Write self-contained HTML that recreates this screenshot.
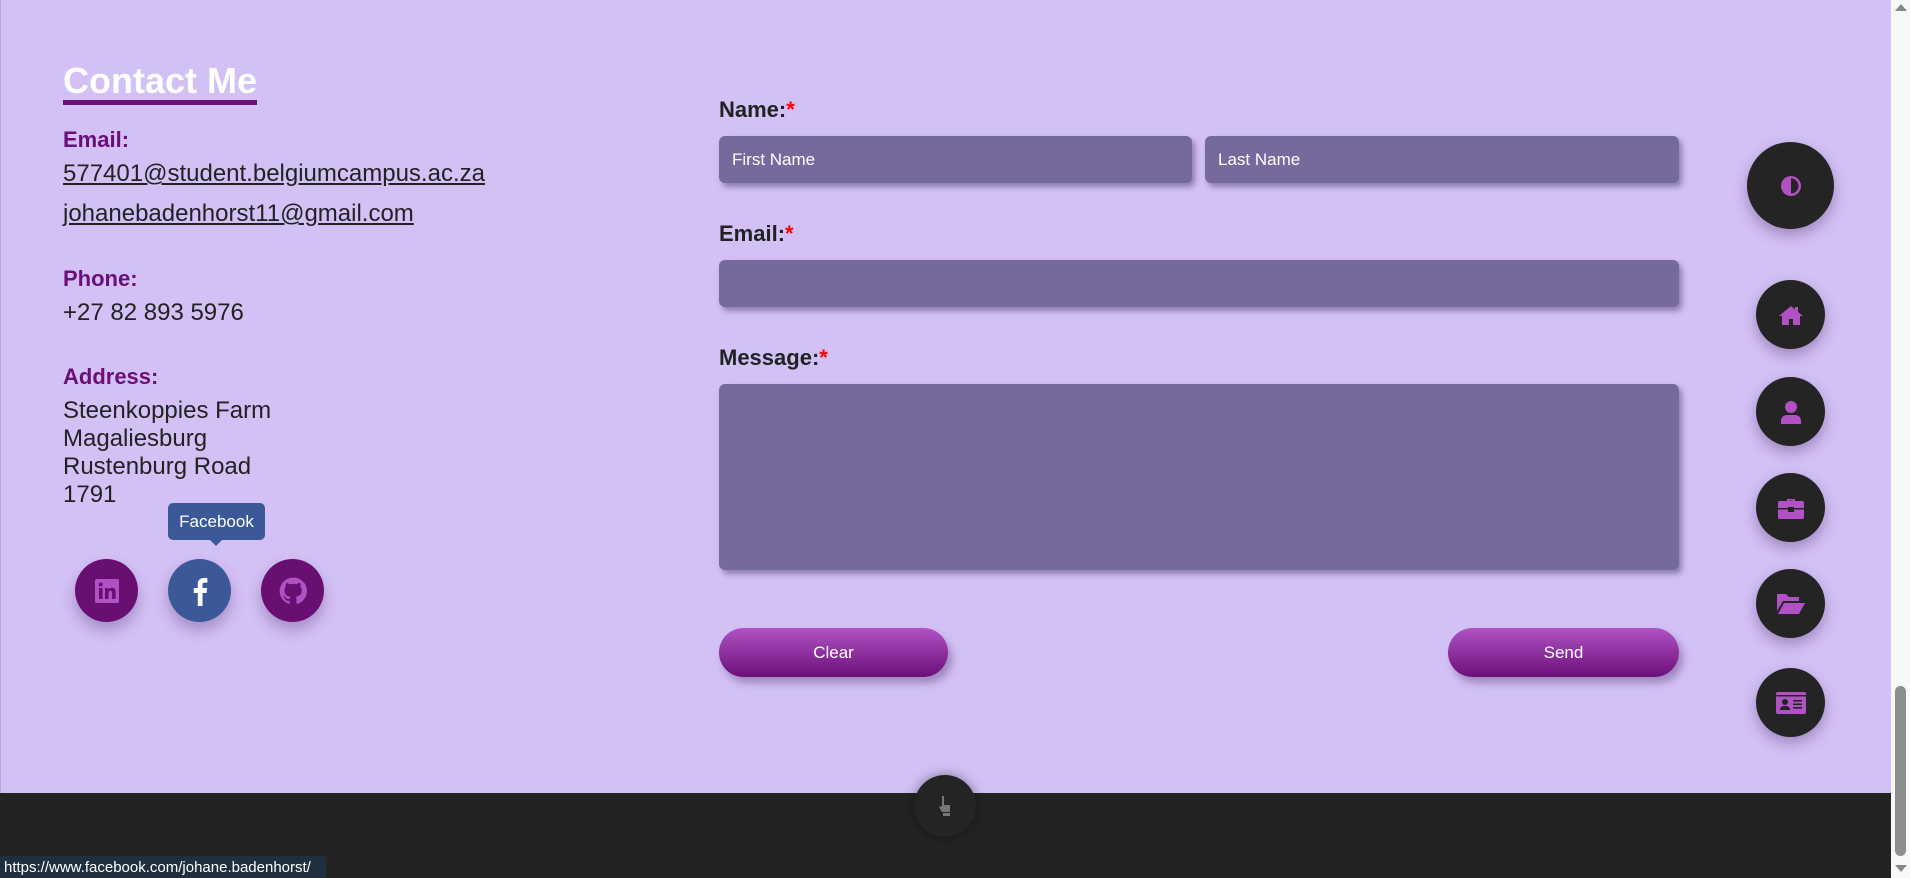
<!DOCTYPE html>
<html><head><meta charset="utf-8"><style>
*{box-sizing:border-box;margin:0;padding:0}
body{width:1910px;height:878px;overflow:hidden;background:#d3c0f5;font-family:"Liberation Sans",Arial,sans-serif;position:relative}
.a{position:absolute;white-space:nowrap}
.lbl{color:#6a0f78;font-weight:bold;font-size:22px}
.txt{color:#222;font-size:24px}
.in{position:absolute;background:#76699c;border-radius:6px;box-shadow:3px 4px 6px rgba(60,40,90,.45);color:#fff;font-size:17px;padding-left:13px;display:flex;align-items:center}
.fl{color:#222;font-weight:bold;font-size:22px}
.fl span{color:#f00}
.btn{position:absolute;height:49px;border-radius:25px;background:linear-gradient(#b052c4,#6b0f7a);color:#fff;font-size:17px;display:flex;align-items:center;justify-content:center;box-shadow:4px 6px 8px rgba(60,30,90,.35)}
.c{position:absolute;border-radius:50%;background:#242424;display:flex;align-items:center;justify-content:center;box-shadow:0 6px 14px rgba(60,30,90,.35)}
.s{position:absolute;border-radius:50%;width:63px;height:63px;display:flex;align-items:center;justify-content:center;box-shadow:0 8px 14px rgba(60,30,90,.3)}
</style></head><body>
<div class="a" style="left:0;top:0;width:1px;height:793px;background:#b8a8e0"></div>
<div class="a" style="left:63px;top:60px;font-size:36px;font-weight:bold;color:#fff">Contact Me</div>
<div class="a" style="left:63px;top:100px;width:194px;height:5px;background:#6a0f78"></div>
<div class="a lbl" style="left:63px;top:127px">Email:</div>
<div class="a txt" style="left:63px;top:160px;text-decoration:underline">577401@student.belgiumcampus.ac.za</div>
<div class="a txt" style="left:63px;top:200px;text-decoration:underline">johanebadenhorst11@gmail.com</div>
<div class="a lbl" style="left:63px;top:266px">Phone:</div>
<div class="a txt" style="left:63px;top:299px">+27 82 893 5976</div>
<div class="a lbl" style="left:63px;top:364px">Address:</div>
<div class="a txt" style="left:63px;top:397px;line-height:28px;white-space:pre">Steenkoppies Farm
Magaliesburg
Rustenburg Road
1791</div>
<div class="a" style="left:168px;top:503px;width:97px;height:37px;background:#3b5998;border-radius:5px;color:#fff;font-size:17px;display:flex;align-items:center;justify-content:center">Facebook</div>
<div class="a" style="left:209px;top:539px;width:0;height:0;border-left:7px solid transparent;border-right:7px solid transparent;border-top:7px solid #3b5998"></div>
<div class="s" style="left:75px;top:559px;background:#690f72"><svg width="24" height="24" viewBox="0 0 24 24"><rect width="24" height="24" rx="2" fill="#b052c4"/><rect x="4" y="9" width="3.5" height="11" fill="#690f72"/><circle cx="5.7" cy="5.5" r="2" fill="#690f72"/><path d="M10 9h3.3v1.6c.6-1 1.8-1.9 3.7-1.9 3 0 3.6 2 3.6 4.6V20h-3.5v-5.5c0-1.3-.1-2.8-1.7-2.8s-1.9 1.300-1.9 2.7V20H10z" fill="#690f72"/></svg></div>
<div class="s" style="left:168px;top:559px;background:#3b5998"><svg width="16" height="30" viewBox="0 0 16 30"><path d="M10.5 30V17h4l.6-5h-4.6V9c0-1.4.4-2.4 2.4-2.4h2.5V2.2C15 2.1 13.5 2 11.8 2 8.2 2 5.8 4.2 5.8 8.2V12H1.8v5h4V30z" fill="#fff"/></svg></div>
<div class="s" style="left:261px;top:559px;background:#690f72"><svg width="28" height="28" viewBox="0 0 24 24"><path fill="#b052c4" d="M12 .5a11.5 11.5 0 0 0-3.6 22.4c.6.1.8-.3.8-.6v-2c-3.2.7-3.900-1.5-3.900-1.5-.5-1.300-1.300-1.700-1.300-1.700-1-.7.1-.7.1-.7 1.2.1 1.8 1.2 1.8 1.2 1 1.8 2.7 1.3 3.4 1 .1-.8.4-1.3.7-1.6-2.6-.3-5.3-1.3-5.3-5.7 0-1.3.5-2.3 1.2-3.1-.1-.3-.5-1.5.1-3.1 0 0 1-.3 3.2 1.2a11 11 0 0 1 5.8 0c2.2-1.5 3.2-1.2 3.2-1.2.6 1.6.2 2.8.1 3.1.7.8 1.2 1.8 1.2 3.1 0 4.4-2.7 5.4-5.3 5.7.4.4.8 1.1.8 2.2v3.2c0 .3.2.7.8.6A11.5 11.5 0 0 0 12 .5z"/></svg></div>

<div class="a fl" style="left:719px;top:97px">Name:<span>*</span></div>
<div class="in" style="left:719px;top:136px;width:473px;height:47px">First Name</div>
<div class="in" style="left:1205px;top:136px;width:474px;height:47px">Last Name</div>
<div class="a fl" style="left:719px;top:221px">Email:<span>*</span></div>
<div class="in" style="left:719px;top:260px;width:960px;height:47px"></div>
<div class="a fl" style="left:719px;top:345px">Message:<span>*</span></div>
<div class="in" style="left:719px;top:384px;width:960px;height:186px"></div>
<div class="btn" style="left:719px;top:628px;width:229px">Clear</div>
<div class="btn" style="left:1448px;top:628px;width:231px">Send</div>

<div class="c" style="left:1747px;top:142px;width:87px;height:87px"><svg width="24" height="24" viewBox="0 0 24 24"><circle cx="12" cy="12" r="10" fill="#b052c4"/><path d="M12 4.5a7.5 7.5 0 0 1 0 15z" fill="#242424"/></svg></div>
<div class="c" style="left:1756px;top:280px;width:69px;height:69px"><svg width="28" height="24" viewBox="0 0 28 24"><path d="M14 3L2 13h3v9h7v-6h4v6h7v-9h3l-5-4V4h-3v2.5z" fill="#b052c4"/></svg></div>
<div class="c" style="left:1756px;top:377px;width:69px;height:69px"><svg width="22" height="24" viewBox="0 0 22 24"><circle cx="11" cy="7" r="6" fill="#b052c4"/><path d="M1 24v-3c0-4 3-6 6-6h8c3 0 6 2 6 6v3z" fill="#b052c4"/></svg></div>
<div class="c" style="left:1756px;top:473px;width:69px;height:69px"><svg width="26" height="22" viewBox="0 0 26 22"><path d="M9 4V2h8v2h-2V3.5h-4V4z" fill="#b052c4"/><rect x="0" y="4" width="26" height="18" rx="2" fill="#b052c4"/><rect x="0" y="11" width="26" height="1.5" fill="#242424"/><rect x="10" y="10" width="6" height="5" fill="#242424"/></svg></div>
<div class="c" style="left:1756px;top:569px;width:69px;height:69px"><svg width="30" height="22" viewBox="0 0 30 22"><path d="M1 1h9l3 3h10v4H7L1 18z" fill="#b052c4"/><path d="M8 10h21l-6 11H2z" fill="#b052c4"/></svg></div>
<div class="c" style="left:1756px;top:668px;width:69px;height:69px"><svg width="30" height="22" viewBox="0 0 30 22"><rect width="30" height="22" rx="2" fill="#b052c4"/><rect x="0" y="3" width="30" height="1.5" fill="#242424"/><circle cx="9" cy="10" r="3" fill="#242424"/><path d="M4 18c0-3 2-4 5-4s5 1 5 4z" fill="#242424"/><rect x="17" y="8" width="9" height="1.6" fill="#242424"/><rect x="17" y="11.5" width="9" height="1.6" fill="#242424"/><rect x="17" y="15" width="9" height="1.6" fill="#242424"/></svg></div>

<div class="a" style="left:0;top:793px;width:1891px;height:85px;background:#232323"></div>
<div class="c" style="left:914px;top:775px;width:62px;height:62px;box-shadow:0 0 12px rgba(0,0,0,.4)"><svg width="14" height="20" viewBox="0 0 14 20"><path d="M4 0h2v9h6v7H4l-3-5 3-1z" fill="#777"/><rect x="5" y="17" width="7" height="3" fill="#777"/></svg></div>
<div class="a" style="left:0;top:856px;width:326px;height:22px;background:#1f2f3f;border-top-right-radius:4px;color:#fff;font-size:15px;padding:3px 0 0 4px">https://www.facebook.com/johane.badenhorst/</div>

<div class="a" style="left:1891px;top:0;width:19px;height:878px;background:#f8f8f8"></div>
<div class="a" style="left:1895px;top:4px;width:0;height:0;border-left:6px solid transparent;border-right:6px solid transparent;border-bottom:7px solid #888"></div>
<div class="a" style="left:1895px;top:865px;width:0;height:0;border-left:6px solid transparent;border-right:6px solid transparent;border-top:7px solid #888"></div>
<div class="a" style="left:1895px;top:686px;width:11px;height:170px;background:#8e8e8e;border-radius:6px"></div>
</body></html>
